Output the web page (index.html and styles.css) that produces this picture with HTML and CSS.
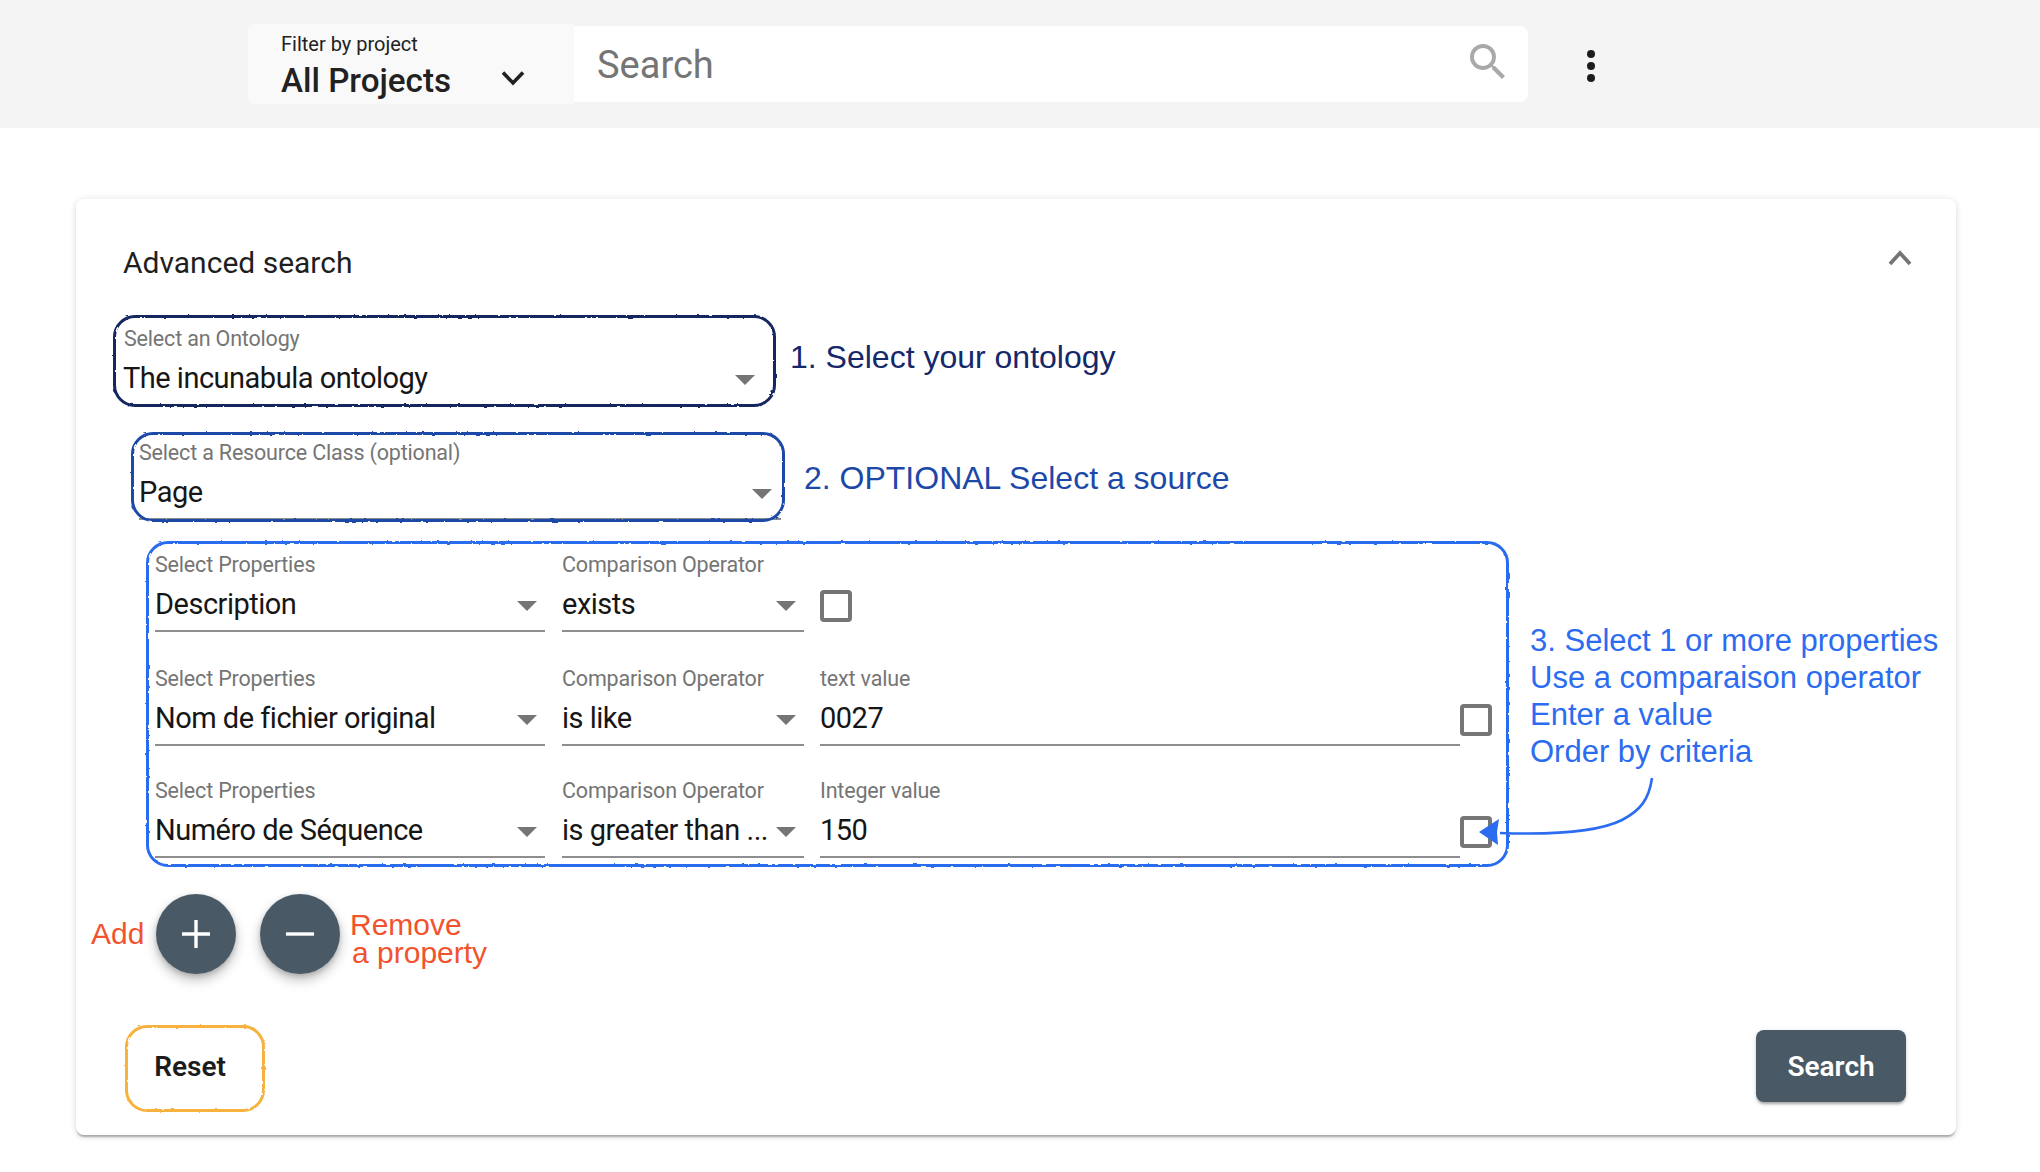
FILE: index.html
```html
<!DOCTYPE html>
<html lang="en">
<head>
<meta charset="utf-8">
<title>Advanced search</title>
<link rel="stylesheet" href="styles.css">
</head>
<body>
<svg class="defs" width="0" height="0" aria-hidden="true">
  <filter id="rough" x="-2%" y="-2%" width="104%" height="104%">
    <feTurbulence type="fractalNoise" baseFrequency="0.18" numOctaves="2" seed="3" result="n"/>
    <feDisplacementMap in="SourceGraphic" in2="n" scale="2.4"/>
  </filter>
</svg>
<header class="topbar">
  <div class="filter">
    <div class="filter-text">
      <div class="filter-label">Filter by project</div>
      <div class="filter-value">All Projects</div>
    </div>
    <svg class="filter-chevron" viewBox="0 0 24 16"><path d="M2 2.5 12 13 22 2.5" fill="none" stroke="#212121" stroke-width="3.6"/></svg>
  </div>
  <div class="searchbox">
    <span class="placeholder">Search</span>
    <svg class="search-icon" viewBox="0 0 24 24"><path fill="#a9a9a9" d="M15.5 14h-.79l-.28-.27A6.471 6.471 0 0 0 16 9.5 6.5 6.5 0 1 0 9.5 16c1.61 0 3.09-.59 4.23-1.57l.27.28v.79l5 4.99L20.49 19l-4.99-5zm-6 0C7.01 14 5 11.99 5 9.5S7.01 5 9.5 5 14 7.01 14 9.5 11.99 14 9.5 14z"/></svg>
  </div>
  <svg class="more" viewBox="0 0 10 34"><circle cx="5" cy="5" r="4"/><circle cx="5" cy="17" r="4"/><circle cx="5" cy="29" r="4"/></svg>
</header>

<main class="card">
  <div class="card-head">
    <h1 class="card-title">Advanced search</h1>
    <svg class="collapse" viewBox="0 0 24 16"><path d="M2 14 12 3 22 14" fill="none" stroke="#757575" stroke-width="3.8"/></svg>
  </div>

  <section class="step step-one">
    <div class="boxed boxed-one">
      <div class="field">
        <div class="label">Select an Ontology</div>
        <div class="value">The incunabula ontology<i class="arrow"></i></div>
      </div>
    </div>
    <p class="note note-one">1. Select your ontology</p>
  </section>

  <section class="step step-two">
    <div class="boxed boxed-two">
      <div class="field underlined">
        <div class="label">Select a Resource Class (optional)</div>
        <div class="value">Page<i class="arrow"></i></div>
      </div>
    </div>
    <p class="note note-two">2. OPTIONAL Select a source</p>
  </section>

  <section class="step step-three">
    <div class="boxed boxed-three">
      <div class="prop-row">
        <div class="field underlined"><div class="label">Select Properties</div><div class="value">Description<i class="arrow"></i></div></div>
        <div class="field underlined"><div class="label">Comparison Operator</div><div class="value">exists<i class="arrow"></i></div></div>
        <div class="check-cell"><span class="check"></span></div>
      </div>
      <div class="prop-row">
        <div class="field underlined"><div class="label">Select Properties</div><div class="value">Nom de fichier original<i class="arrow"></i></div></div>
        <div class="field underlined"><div class="label">Comparison Operator</div><div class="value">is like<i class="arrow"></i></div></div>
        <div class="field underlined"><div class="label">text value</div><div class="value">0027</div></div>
        <span class="check"></span>
      </div>
      <div class="prop-row">
        <div class="field underlined"><div class="label">Select Properties</div><div class="value">Numéro de Séquence<i class="arrow"></i></div></div>
        <div class="field underlined"><div class="label">Comparison Operator</div><div class="value">is greater than ...<i class="arrow"></i></div></div>
        <div class="field underlined"><div class="label">Integer value</div><div class="value">150</div></div>
        <span class="check"></span>
      </div>
    </div>
    <p class="note note-three">3. Select 1 or more properties<br>Use a comparaison operator<br>Enter a value<br>Order by criteria</p>
    <svg class="pointer" viewBox="0 0 200 80" width="200" height="80">
      <path d="M174 5C171 26 163 37 144 47 120 59 78 62 22 60" fill="none" stroke="#2b6cf0" stroke-width="2.6"/>
      <path d="M1 59 21 46 19 59 20 72Z" fill="#2b6cf0"/>
    </svg>
  </section>

  <section class="fab-row">
    <span class="add-note">Add</span>
    <button class="fab" type="button"><svg viewBox="0 0 32 32"><path d="M16 2V30M2 16H30" stroke="#fff" stroke-width="3.4" fill="none"/></svg></button>
    <button class="fab" type="button"><svg viewBox="0 0 32 32"><path d="M2 16H30" stroke="#fff" stroke-width="3.4" fill="none"/></svg></button>
    <span class="remove-note">Remove<br><span class="remove-second">a property</span></span>
  </section>

  <footer class="actions">
    <button class="btn-reset" type="button">Reset</button>
    <button class="btn-search" type="button">Search</button>
  </footer>
</main>
</body>
</html>
```

FILE: styles.css
```css
* { box-sizing: border-box; }
html, body { margin: 0; padding: 0; background: #fff; height: 1172px; overflow: hidden; }
body { font-family: Roboto, "Liberation Sans", sans-serif; color: #1a1a1a; }
.defs { display: block; height: 0; }

/* Top bar */
.topbar { height: 128px; background: #f4f4f4; display: flex; align-items: center; padding-left: 248px; }
.filter { width: 326px; height: 80px; margin-top: -1px; background: #f9f9f9; border-radius: 8px 0 0 8px; display: flex; align-items: flex-start; padding: 9px 0 0 33px; }
.filter-text { width: 220px; }
.filter-label { font-size: 20px; line-height: 23px; color: #222; }
.filter-value { margin-top: 1px; font-size: 33.2px; line-height: 48px; font-weight: 500; color: #212121; }
.filter-chevron { width: 24px; height: 16px; margin-top: 37px; }
.searchbox { width: 954px; height: 76px; background: #fff; border-radius: 0 8px 8px 0; display: flex; align-items: center; justify-content: space-between; padding: 2px 19px 0 23px; }
.placeholder { font-size: 38px; color: #757575; }
.search-icon { width: 48px; height: 48px; margin-top: -7px; margin-right: -3px; }
.more { width: 10px; height: 34px; margin: 3px 0 0 58px; fill: #1c1c1c; }

/* Card */
.card { margin: 71px 84px 0 76px; height: 936px; background: #fff; border-radius: 8px; padding: 0 50px 0 37px; box-shadow: 0 3px 2px -1px rgba(0,0,0,.28), 0 2px 6px rgba(0,0,0,.1), 0 0 8px rgba(0,0,0,.06); }
.card-head { height: 116px; display: flex; justify-content: space-between; align-items: flex-start; padding-left: 10px; margin-right: -6px; }
.card-title { margin: 46px 0 0; font-size: 30px; line-height: 36px; font-weight: 400; color: #1f1f1f; }
.collapse { width: 24px; height: 16px; margin-top: 51px; }

/* Steps */
.step { display: flex; align-items: flex-start; position: relative; }
.step-two { margin: 25px 0 0 18px; }
.step-three { margin: 19px 0 0 33px; }
.boxed { position: relative; flex: none; }
.boxed::before { content: ""; position: absolute; inset: 0; border: 3px solid #12275f; border-radius: 22px; filter: url(#rough); pointer-events: none; }
.boxed-one { width: 663px; height: 92px; padding: 11px 8px 0 8px; }
.boxed-two { width: 654px; height: 90px; padding: 8px 4px 0 8px; }
.boxed-two::before { border-color: #1c49a8; }
.boxed-three { width: 1363px; height: 326px; padding: 11px 0 0 9px; }
.boxed-three::before { border-color: #2b6cf0; }

/* Fields */
.label { font-size: 21.5px; line-height: 26px; letter-spacing: -.18px; color: #757575; }
.value { position: relative; margin-top: 4px; font-size: 29px; line-height: 44px; letter-spacing: -.5px; color: #161616; white-space: nowrap; }
.field.underlined { padding-bottom: 4px; border-bottom: 2px solid #8e8e8e; }
.boxed-one .field { padding-left: 3px; }
.boxed-one .value { margin-left: -1px; }
.arrow { position: absolute; right: 8px; top: 19px; width: 0; height: 0; border-left: 10px solid transparent; border-right: 10px solid transparent; border-top: 10px solid #757575; }
.boxed-one .arrow { right: 13px; }
.boxed-two .arrow { right: 9px; }
.prop-row { display: grid; grid-template-columns: 407px 258px 640px 32px; height: 81px; margin-bottom: 33px; align-items: start; }
.prop-row:nth-child(2) { margin-bottom: 31px; }
.prop-row .field:nth-child(1) { margin-right: 17px; }
.prop-row .field:nth-child(2) { margin-right: 16px; }
.check { display: block; width: 32px; height: 32px; border: 4px solid #757575; border-radius: 4px; margin-top: 38px; }
.check-cell { grid-column: 3; }

/* Notes */
.note { margin: 0; font-family: "Liberation Sans", Arial, sans-serif; font-size: 32px; white-space: nowrap; }
.note-one { margin: 23px 0 0 14px; line-height: 38px; color: #14286a; }
.note-two { margin: 27px 0 0 19px; line-height: 38px; color: #1c49a8; }
.note-three { margin: 81px 0 0 21px; line-height: 37px; font-size: 31px; color: #2b6cf0; }
.pointer { position: absolute; left: 1332px; top: 232px; }

/* FAB row */
.fab-row { display: flex; align-items: flex-start; margin-top: 27px; height: 80px; }
.add-note { margin: 20px 0 0 -22px; width: 65px; font-family: "Liberation Sans", Arial, sans-serif; font-size: 30px; line-height: 40px; color: #f0532d; }
.fab { width: 80px; height: 80px; margin: 0 24px 0 0; padding: 0; border: 0; border-radius: 50%; background: #495a66; display: flex; align-items: center; justify-content: center; box-shadow: 0 6px 12px rgba(0,0,0,.25), 0 2px 5px rgba(0,0,0,.15); }
.fab svg { width: 32px; height: 32px; }
.fab + .fab { margin-right: 10px; }
.remove-note { margin-top: 17px; font-family: "Liberation Sans", Arial, sans-serif; font-size: 30px; line-height: 28px; color: #f0532d; white-space: nowrap; }
.remove-second { margin-left: 2px; }

/* Actions */
.actions { display: flex; justify-content: space-between; align-items: flex-start; margin-top: 51px; padding-left: 12px; }
.btn-reset { position: relative; width: 140px; height: 87px; padding: 0 10px 4px 0; border: 0; background: transparent; font: 600 28px Roboto, sans-serif; color: #1c1c1c; }
.btn-reset::before { content: ""; position: absolute; inset: 0; border: 3px solid #f6b23c; border-radius: 22px; filter: url(#rough); }
.btn-search { width: 150px; height: 72px; margin-top: 5px; padding: 0; border: 0; border-radius: 8px; background: #495a66; font: 600 28px Roboto, sans-serif; color: #fff; box-shadow: 0 3px 3px -1px rgba(0,0,0,.3), 0 1px 5px rgba(0,0,0,.12); }
```
